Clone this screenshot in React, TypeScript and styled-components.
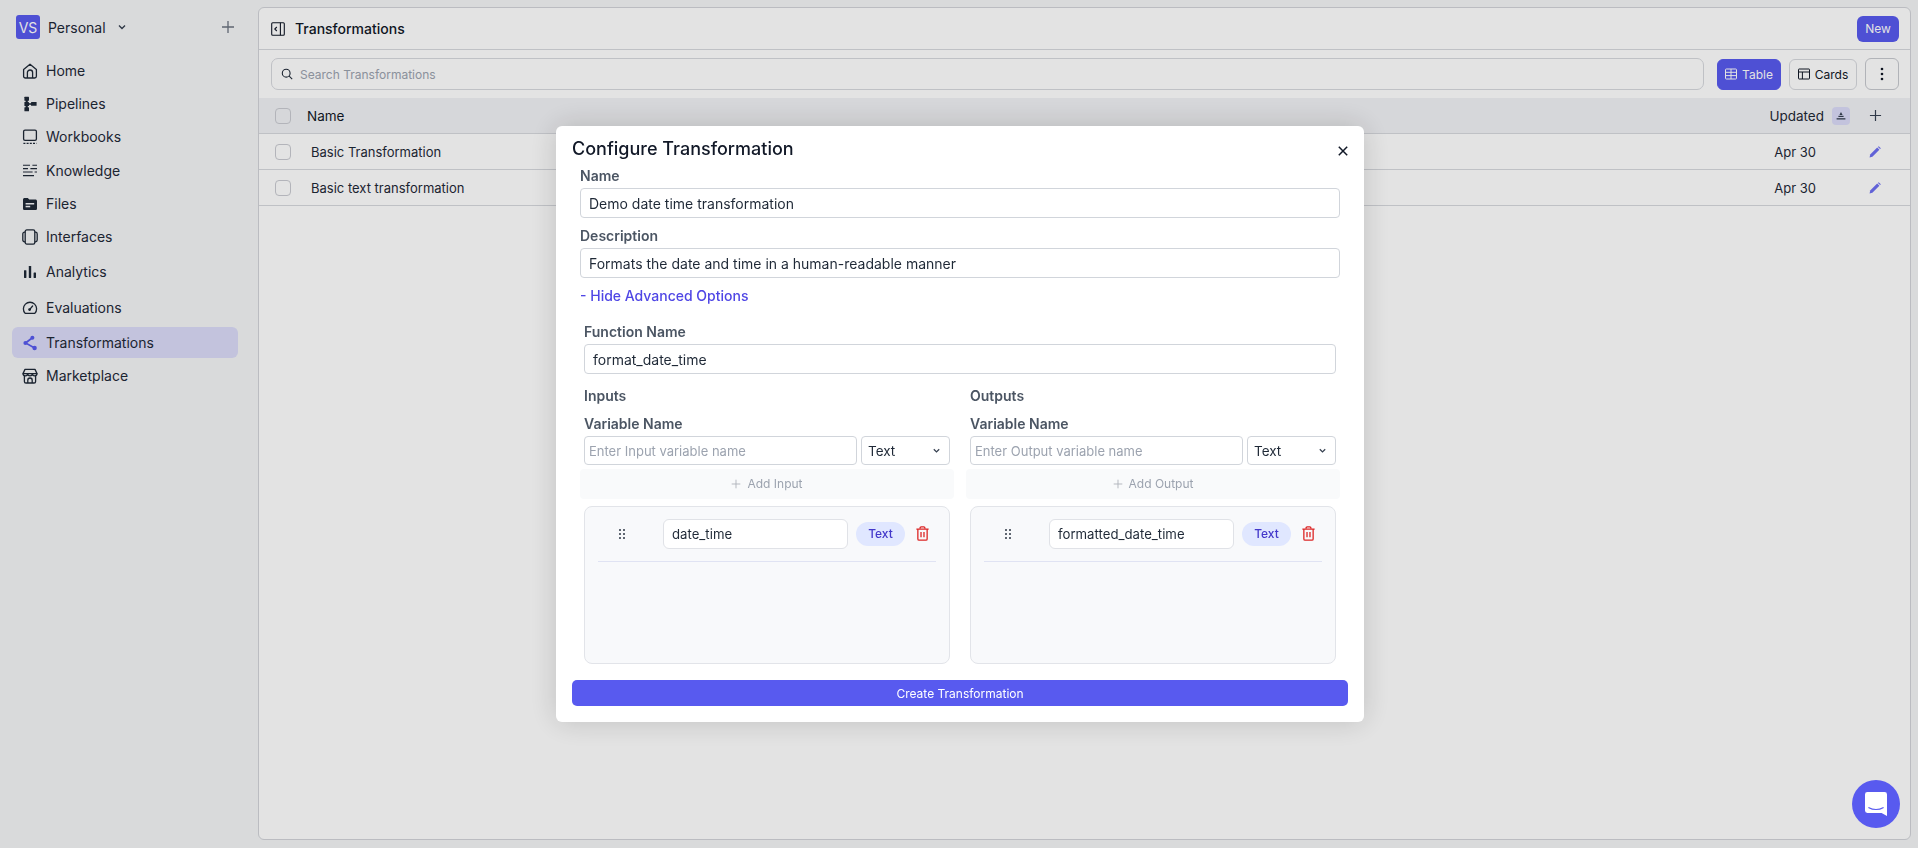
import React from 'react';
import styled, { createGlobalStyle } from 'styled-components';

const GlobalStyle = createGlobalStyle`
    html, body {
        margin: 0;
        height: 100%;
        overflow: hidden;
        background: #f4f5f7;
    }
    body, button {
        font-family: 'Inter', 'Liberation Sans', sans-serif;
    }
    * {
        box-sizing: border-box;
    }
`;

const ink = '#1f2937';

const HomeIcon = () => (
    <svg width="16" height="16" viewBox="0 0 16 16" fill="none" stroke={ink} strokeWidth="1.3" strokeLinejoin="round">
        <path d="M1.6 6.6 8 1.2l6.4 5.4v6.6a1.8 1.8 0 0 1-1.8 1.8H3.4a1.8 1.8 0 0 1-1.8-1.8z" />
        <path d="M5.4 15V9.6a2.6 2.6 0 0 1 5.2 0V15" />
    </svg>
);

const PipelineIcon = () => (
    <svg width="16" height="16" viewBox="0 0 16 16" fill={ink}>
        <rect x="2.4" y="0.8" width="4.6" height="4" rx="0.5" />
        <rect x="2.4" y="6" width="4.6" height="4" rx="0.5" />
        <rect x="2.4" y="11.2" width="4.6" height="4" rx="0.5" />
        <rect x="3.6" y="3" width="2.2" height="10" />
        <rect x="6.4" y="7.2" width="3" height="1.6" />
        <rect x="9" y="6" width="5.6" height="3.8" rx="0.5" />
    </svg>
);

const WorkbookIcon = () => (
    <svg width="16" height="16" viewBox="0 0 16 16" fill="none" stroke={ink}>
        <rect x="1.6" y="1.2" width="12.8" height="10.2" rx="1.4" strokeWidth="1.3" />
        <path d="M1.4 14.4h13.2" strokeWidth="1.2" strokeDasharray="2 1.2" />
    </svg>
);

const KnowledgeIcon = () => (
    <svg width="16" height="16" viewBox="0 0 16 16" fill="none" stroke={ink} strokeWidth="1.1">
        <path d="M1 2.2h7M10.4 2.2H15M1 5.6h5M8.4 5.6H15M1 9h9.6M12.6 9H15M1 12.6h11" />
    </svg>
);

const FilesIcon = () => (
    <svg width="16" height="16" viewBox="0 0 16 16">
        <path
            fill={ink}
            d="M1 3.6c0-.9.7-1.6 1.6-1.6h3.2l1.5 1.5h6.1c.9 0 1.6.7 1.6 1.6v7.3c0 .9-.7 1.6-1.6 1.6H2.6c-.9 0-1.6-.7-1.6-1.6z"
        />
        <rect x="3.6" y="7" width="8.6" height="1.5" fill="#f3f4f7" />
        <rect x="3.6" y="9.8" width="4.6" height="1.5" fill="#f3f4f7" />
    </svg>
);

const InterfaceIcon = () => (
    <svg width="16" height="16" viewBox="0 0 16 16" fill="none" stroke={ink} strokeWidth="1.3">
        <rect x="3.2" y="0.9" width="9.6" height="14.2" rx="1.6" />
        <path d="M3.2 3.2H2.6A1.8 1.8 0 0 0 .8 5v6a1.8 1.8 0 0 0 1.8 1.8h.6M12.8 3.2h.6A1.8 1.8 0 0 1 15.2 5v6a1.8 1.8 0 0 1-1.8 1.8h-.6" />
    </svg>
);

const AnalyticsIcon = () => (
    <svg width="16" height="16" viewBox="0 0 16 16" fill={ink}>
        <rect x="2" y="6.2" width="2.4" height="7.8" rx="0.4" />
        <rect x="6.8" y="2" width="2.4" height="12" rx="0.4" />
        <rect x="11.6" y="8.6" width="2.4" height="5.4" rx="0.4" />
    </svg>
);

const GaugeIcon = () => (
    <svg width="16" height="16" viewBox="0 0 16 16" fill="none" stroke={ink} strokeWidth="1.3" strokeLinecap="round">
        <path d="M3.2 13.4h9.6a6.6 6.6 0 1 0-9.6 0z" strokeLinejoin="round" />
        <path d="M7.6 9.6 10.6 6" />
        <circle cx="7.6" cy="9.6" r="0.8" fill={ink} />
    </svg>
);

const ShareIcon = () => (
    <svg width="16" height="16" viewBox="0 0 16 16" fill="#585aef" stroke="#585aef">
        <path d="M10.4 2.8 3.6 8l9 5" fill="none" strokeWidth="1.7" />
        <circle cx="10.4" cy="2.8" r="2" stroke="none" />
        <circle cx="3.4" cy="8" r="2" stroke="none" />
        <circle cx="12.6" cy="13" r="2.2" stroke="none" />
    </svg>
);

const StoreIcon = () => (
    <svg width="16" height="16" viewBox="0 0 16 16" fill="none" stroke={ink} strokeWidth="1.3" strokeLinejoin="round">
        <path d="M3 1.4h10l2 4.2H1z" />
        <path d="M1 5.6a2.3 2.3 0 0 0 4.66 0 2.34 2.34 0 0 0 4.68 0A2.33 2.33 0 0 0 15 5.6" />
        <path d="M2.4 8v5.4c0 .9.7 1.6 1.6 1.6h8c.9 0 1.6-.7 1.6-1.6V8" />
        <path d="M5.8 15v-2.8a2.2 2.2 0 0 1 4.4 0V15" />
    </svg>
);

const ChevronDown = ({ size = 10 }: { size?: number }) => (
    <svg width={size} height={size} viewBox="0 0 10 10" fill="none" stroke="#374151" strokeWidth="1.4">
        <path d="M2 3.6 5 6.6l3-3" />
    </svg>
);

const Plus = ({ size = 14, color = '#6b7280' }: { size?: number; color?: string }) => (
    <svg width={size} height={size} viewBox="0 0 14 14" fill="none" stroke={color} strokeWidth="1.3">
        <path d="M7 1v12M1 7h12" />
    </svg>
);

const CollapseIcon = () => (
    <svg width="14" height="14" viewBox="0 0 14 14" fill="none" stroke="#111827" strokeWidth="1.1">
        <rect x="0.7" y="0.7" width="12.6" height="12.6" rx="1" />
        <path d="M9.4 0.7v12.6M5.8 5 3.8 7l2 2" />
    </svg>
);

const SearchIcon = () => (
    <svg width="12" height="12" viewBox="0 0 12 12" fill="none" stroke="#1f2937" strokeWidth="1.1">
        <circle cx="5.2" cy="5.2" r="3.9" />
        <path d="m8.2 8.2 3 3" />
    </svg>
);

const TableIcon = () => (
    <svg width="12" height="12" viewBox="0 0 12 12" fill="none" stroke="currentColor" strokeWidth="1">
        <rect x="0.5" y="1" width="11" height="10" rx="0.8" />
        <path d="M0.5 4.3h11M0.5 7.6h11M6 1v10" />
    </svg>
);

const CardsIcon = () => (
    <svg width="12" height="12" viewBox="0 0 12 12" fill="none" stroke="currentColor" strokeWidth="1">
        <rect x="0.5" y="1" width="11" height="10" rx="0.5" />
        <path d="M0.5 4h11M4.4 4v7" />
    </svg>
);

const MoreIcon = () => (
    <svg width="4" height="14" viewBox="0 0 4 14" fill="#111827">
        <circle cx="2" cy="2" r="1.3" />
        <circle cx="2" cy="7" r="1.3" />
        <circle cx="2" cy="12" r="1.3" />
    </svg>
);

const SortIcon = () => (
    <svg width="10" height="8" viewBox="0 0 10 8" fill="#374151">
        <path d="M5 0 6.6 3H3.4z" />
        <rect x="2.4" y="3.8" width="5.2" height="1.2" />
        <rect x="0.6" y="6.2" width="8.8" height="1.3" />
    </svg>
);

const PencilIcon = () => (
    <svg width="12" height="12" viewBox="0 0 12 12" fill="#6d6ff2">
        <path d="M0.6 11.4 1.2 8.6 8.2 1.6l2.2 2.2-7 7z" />
        <path d="M8.9 0.9 9.7 0.2l2.1 2.1-.7.8z" />
    </svg>
);

const CloseIcon = () => (
    <svg width="10" height="10" viewBox="0 0 10 10" fill="none" stroke="#111827" strokeWidth="1.5">
        <path d="m0.8 0.8 8.4 8.4M9.2 0.8 0.8 9.2" />
    </svg>
);

const DragIcon = () => (
    <svg width="6" height="10" viewBox="0 0 6 10" fill="#1f2937">
        {[1, 5, 9].map((cy) => (
            <React.Fragment key={cy}>
                <circle cx="1" cy={cy} r="0.95" />
                <circle cx="5" cy={cy} r="0.95" />
            </React.Fragment>
        ))}
    </svg>
);

const TrashIcon = () => (
    <svg width="13" height="15" viewBox="0 0 14 16" fill="none" stroke="#dc2626" strokeWidth="1.4">
        <path d="M0.4 3.2h13.2M2 3.2v10.6c0 .7.6 1.3 1.3 1.3h7.4c.7 0 1.3-.6 1.3-1.3V3.2" />
        <path d="M4.4 3V2c0-.7.5-1.2 1.2-1.2h2.8c.7 0 1.2.5 1.2 1.2v1M5.4 6.4v5.6M8.6 6.4v5.6" />
    </svg>
);

const ChatIcon = () => (
    <svg width="22" height="24" viewBox="0 0 22 24">
        <path
            fill="#ffffff"
            d="M2.4 0h17.2A2.4 2.4 0 0 1 22 2.4V24l-5.4-3H2.4A2.4 2.4 0 0 1 0 18.6V2.4A2.4 2.4 0 0 1 2.4 0z"
        />
        <path d="M3.4 15.4c4.6 2.6 10.6 2.6 15.2 0" fill="none" stroke="#585aef" strokeWidth="1.1" />
    </svg>
);

const navItems = [
    { label: 'Home', icon: <HomeIcon />, top: 0 },
    { label: 'Pipelines', icon: <PipelineIcon />, top: 2 },
    { label: 'Workbooks', icon: <WorkbookIcon />, top: 2 },
    { label: 'Knowledge', icon: <KnowledgeIcon />, top: 3 },
    { label: 'Files', icon: <FilesIcon />, top: 2 },
    { label: 'Interfaces', icon: <InterfaceIcon />, top: 2 },
    { label: 'Analytics', icon: <AnalyticsIcon />, top: 4 },
    { label: 'Evaluations', icon: <GaugeIcon />, top: 5 },
    { label: 'Transformations', icon: <ShareIcon />, top: 4, active: true },
    { label: 'Marketplace', icon: <StoreIcon />, top: 2 },
];

const App: React.FC = () => {
    return (
        <Page>
            <GlobalStyle />
            <Sidebar>
                <Workspace>
                    <Avatar>VS</Avatar>
                    <WorkspaceName>Personal</WorkspaceName>
                    <ChevronDown />
                    <WorkspaceAdd>
                        <Plus />
                    </WorkspaceAdd>
                </Workspace>
                <Nav>
                    {navItems.map((item) => (
                        <NavItem key={item.label} $top={item.top} $active={item.active}>
                            {item.icon}
                            <span>{item.label}</span>
                        </NavItem>
                    ))}
                </Nav>
            </Sidebar>
            <Main>
                <Header>
                    <HeaderTitle>
                        <CollapseIcon />
                        <span>Transformations</span>
                    </HeaderTitle>
                    <NewButton>New</NewButton>
                </Header>
                <Toolbar>
                    <SearchBox>
                        <SearchIcon />
                        <span>Search Transformations</span>
                    </SearchBox>
                    <ViewButton $active $width={64}>
                        <TableIcon />
                        Table
                    </ViewButton>
                    <ViewButton $width={68}>
                        <CardsIcon />
                        Cards
                    </ViewButton>
                    <MenuButton>
                        <MoreIcon />
                    </MenuButton>
                </Toolbar>
                <TableHead>
                    <Checkbox />
                    <HeadName>Name</HeadName>
                    <HeadUpdated>Updated</HeadUpdated>
                    <SortBadge>
                        <SortIcon />
                    </SortBadge>
                    <ActionCell>
                        <Plus size={13} color="#374151" />
                    </ActionCell>
                </TableHead>
                {['Basic Transformation', 'Basic text transformation'].map((name) => (
                    <TableRow key={name}>
                        <Checkbox />
                        <RowName>{name}</RowName>
                        <RowDate>Apr 30</RowDate>
                        <ActionCell>
                            <PencilIcon />
                        </ActionCell>
                    </TableRow>
                ))}
            </Main>
            <Overlay>
                <Modal>
                    <ModalTitle>Configure Transformation</ModalTitle>
                    <CloseButton>
                        <CloseIcon />
                    </CloseButton>
                    <Form>
                        <FieldLabel>Name</FieldLabel>
                        <Field>Demo date time transformation</Field>
                        <FieldLabel $top={10}>Description</FieldLabel>
                        <Field>Formats the date and time in a human-readable manner</Field>
                        <AdvancedLink>- Hide Advanced Options</AdvancedLink>
                        <Advanced>
                            <FieldLabel>Function Name</FieldLabel>
                            <Field>format_date_time</Field>
                            <Columns>
                                <VariableColumn kind="Input" item="date_time" title="Inputs" />
                                <VariableColumn kind="Output" item="formatted_date_time" title="Outputs" />
                            </Columns>
                        </Advanced>
                    </Form>
                    <CreateButton>Create Transformation</CreateButton>
                </Modal>
            </Overlay>
            <ChatButton>
                <ChatIcon />
            </ChatButton>
        </Page>
    );
};

const VariableColumn: React.FC<{ kind: string; item: string; title: string }> = ({ kind, item, title }) => (
    <Column>
        <ColumnTitle>{title}</ColumnTitle>
        <VariableLabel>Variable Name</VariableLabel>
        <AddRow>
            <Placeholder>Enter {kind} variable name</Placeholder>
            <TypeSelect>
                Text
                <ChevronDown size={9} />
            </TypeSelect>
        </AddRow>
        <AddButton>
            <Plus size={10} color="#b0b4bb" />
            Add {kind}
        </AddButton>
        <VariableList>
            <VariableRow>
                <DragHandle>
                    <DragIcon />
                </DragHandle>
                <VariableInput>{item}</VariableInput>
                <TypeBadge>Text</TypeBadge>
                <TrashIcon />
            </VariableRow>
        </VariableList>
    </Column>
);

const Page = styled.div`
    display: flex;
    width: 1918px;
    height: 848px;
    background: #f4f5f7;
    color: #111827;
`;

const Sidebar = styled.aside`
    width: 258px;
    flex-shrink: 0;
    padding: 15px 20px 0 12px;
`;

const Workspace = styled.div`
    display: flex;
    align-items: center;
    height: 24px;
    padding-left: 4px;
`;

const Avatar = styled.div`
    width: 24px;
    height: 24px;
    border-radius: 3px;
    background: #585aef;
    color: #ffffff;
    font-size: 14px;
    display: flex;
    align-items: center;
    justify-content: center;
`;

const WorkspaceName = styled.span`
    margin: 0 11px 0 8px;
    font-size: 14px;
    color: #1f2937;
`;

const WorkspaceAdd = styled.div`
    margin-left: auto;
    margin-right: 3px;
    display: flex;
`;

const Nav = styled.nav`
    display: flex;
    flex-direction: column;
    margin-top: 16px;
`;

const NavItem = styled.div<{ $top: number; $active?: boolean }>`
    display: flex;
    align-items: center;
    gap: 8px;
    height: 31px;
    margin-top: ${(props) => props.$top}px;
    padding-left: 10px;
    border-radius: 6px;
    font-size: 14px;
    color: #1f2937;
    background: ${(props) => (props.$active ? '#dbdcf9' : 'transparent')};
`;

const Main = styled.main`
    flex: 1;
    margin: 7px 7px 8px 0;
    background: #ffffff;
    border: 1px solid #d2d4d9;
    border-radius: 6px;
    overflow: hidden;
`;

const Header = styled.header`
    display: flex;
    align-items: center;
    justify-content: space-between;
    height: 42px;
    padding: 0 11px 0 12px;
    border-bottom: 1px solid #d7d9de;
`;

const HeaderTitle = styled.div`
    display: flex;
    align-items: center;
    gap: 10px;
    font-size: 14px;
    font-weight: 500;
    color: #111827;
`;

const NewButton = styled.button`
    height: 26px;
    width: 42px;
    padding: 0;
    border: none;
    border-radius: 6px;
    background: #585aef;
    color: #ffffff;
    font-size: 12px;
`;

const Toolbar = styled.div`
    display: flex;
    align-items: center;
    gap: 8px;
    height: 48px;
    padding: 0 11px 0 12px;
`;

const SearchBox = styled.div`
    flex: 1;
    display: flex;
    align-items: center;
    gap: 7px;
    height: 32px;
    margin-right: 5px;
    padding: 0 9px;
    border: 1px solid #d7d9de;
    border-radius: 7px;
    font-size: 12px;
    color: #9ca3af;
`;

const ViewButton = styled.button<{ $active?: boolean; $width: number }>`
    display: flex;
    align-items: center;
    justify-content: center;
    gap: 5px;
    width: ${(props) => props.$width}px;
    height: 31px;
    padding: 0;
    border: 1px solid ${(props) => (props.$active ? '#585aef' : '#d7d9de')};
    border-radius: 6px;
    background: ${(props) => (props.$active ? '#585aef' : 'transparent')};
    color: ${(props) => (props.$active ? '#ffffff' : '#111827')};
    font-size: 12px;
`;

const MenuButton = styled.button`
    display: flex;
    align-items: center;
    justify-content: center;
    width: 34px;
    height: 32px;
    padding: 0;
    border: 1px solid #c7c9cf;
    border-radius: 6px;
    background: transparent;
`;

const TableHead = styled.div`
    display: flex;
    align-items: center;
    height: 36px;
    padding-left: 16px;
    background: #f1f2f5;
    border-bottom: 1px solid #d7d9de;
`;

const TableRow = styled.div`
    display: flex;
    align-items: center;
    height: 36px;
    padding-left: 16px;
    border-bottom: 1px solid #d7d9de;
`;

const Checkbox = styled.div`
    width: 16px;
    height: 16px;
    border: 1px solid #c9cbd1;
    border-radius: 4px;
`;

const HeadName = styled.div`
    margin-left: 16px;
    font-size: 13.5px;
    color: #111827;
`;

const HeadUpdated = styled.div`
    margin-left: auto;
    font-size: 13.5px;
    color: #1f2937;
`;

const SortBadge = styled.div`
    display: flex;
    align-items: center;
    justify-content: center;
    width: 18px;
    height: 18px;
    margin-left: 8px;
    border-radius: 4px;
    background: #dbdcf9;
`;

const ActionCell = styled.div`
    display: flex;
    align-items: center;
    justify-content: center;
    width: 50px;
    margin-right: 10px;
`;

const RowName = styled.div`
    margin-left: 20px;
    font-size: 13px;
    color: #1f2937;
`;

const RowDate = styled.div`
    margin-left: auto;
    margin-right: 34px;
    font-size: 13px;
    color: #1f2937;
`;

const Overlay = styled.div`
    position: fixed;
    inset: 0;
    display: flex;
    align-items: center;
    justify-content: center;
    padding-left: 2px;
    background: rgba(0, 0, 0, 0.11);
`;

const Modal = styled.div`
    position: relative;
    width: 808px;
    height: 596px;
    padding: 0 16px;
    background: #ffffff;
    border-radius: 6px;
    box-shadow: 0 0 30px rgba(0, 0, 0, 0.16);
`;

const ModalTitle = styled.h2`
    margin: 0;
    padding-top: 12px;
    font-size: 18px;
    line-height: 22px;
    font-weight: 500;
    color: #111827;
`;

const CloseButton = styled.div`
    position: absolute;
    top: 20px;
    right: 16px;
    display: flex;
`;

const Form = styled.div`
    padding: 0 8px;
`;

const FieldLabel = styled.div<{ $top?: number }>`
    margin-top: ${(props) => props.$top ?? 8}px;
    margin-bottom: 4px;
    height: 16px;
    line-height: 16px;
    font-size: 14px;
    font-weight: 600;
    color: #4b5563;
`;

const Field = styled.div`
    display: flex;
    align-items: center;
    height: 30px;
    padding: 0 8px;
    border: 1px solid #d1d5db;
    border-radius: 4px;
    font-size: 14px;
    color: #1f2937;
`;

const AdvancedLink = styled.div`
    margin-top: 9px;
    height: 18px;
    line-height: 18px;
    font-size: 14px;
    font-weight: 500;
    color: #4f46e5;
`;

const Advanced = styled.div`
    padding: 11px 4px 0;
`;

const Columns = styled.div`
    display: grid;
    grid-template-columns: 366px 366px;
    gap: 20px;
    margin-top: 14px;
`;

const Column = styled.div`
    display: flex;
    flex-direction: column;
`;

const ColumnTitle = styled.div`
    height: 16px;
    line-height: 16px;
    font-size: 14px;
    font-weight: 600;
    color: #4b5563;
`;

const VariableLabel = styled.div`
    margin-top: 12px;
    margin-bottom: 4px;
    height: 16px;
    line-height: 16px;
    font-size: 14px;
    font-weight: 600;
    color: #4b5563;
`;

const AddRow = styled.div`
    display: flex;
    gap: 4px;
    height: 29px;
`;

const Placeholder = styled.div`
    flex: 1;
    display: flex;
    align-items: center;
    padding: 0 4px;
    border: 1px solid #d1d5db;
    border-radius: 4px;
    font-size: 13px;
    color: #9ca3af;
`;

const TypeSelect = styled.div`
    display: flex;
    align-items: center;
    justify-content: space-between;
    width: 89px;
    padding: 0 8px 0 6px;
    border: 1px solid #d1d5db;
    border-radius: 4px;
    font-size: 13.5px;
    color: #1f2937;
`;

const AddButton = styled.div`
    display: flex;
    align-items: center;
    justify-content: center;
    gap: 6px;
    height: 30px;
    margin: 4px -4px 0;
    padding-bottom: 1px;
    border-radius: 4px;
    background: #f9fafb;
    font-size: 12px;
    color: #9ca3af;
`;

const VariableList = styled.div`
    height: 158px;
    margin-top: 7px;
    padding: 12px 13px 0;
    background: #f8f9fb;
    border: 1px solid #e2e4e9;
    border-radius: 8px;
`;

const VariableRow = styled.div`
    display: flex;
    align-items: center;
    height: 43px;
    padding-bottom: 13px;
    border-bottom: 1px solid #e0e3f3;
`;

const DragHandle = styled.div`
    display: flex;
    justify-content: center;
    width: 40px;
    margin-left: 4px;
    margin-right: 21px;
`;

const VariableInput = styled.div`
    display: flex;
    align-items: center;
    width: 185px;
    height: 30px;
    padding: 0 8px;
    background: #ffffff;
    border: 1px solid #e0e2e7;
    border-radius: 6px;
    font-size: 13.2px;
    color: #1f2937;
`;

const TypeBadge = styled.div`
    display: flex;
    align-items: center;
    justify-content: center;
    width: 49px;
    height: 24px;
    margin: 0 11px 0 8px;
    border-radius: 12px;
    background: #e0e7ff;
    font-size: 12px;
    font-weight: 500;
    color: #4338ca;
`;

const CreateButton = styled.button`
    display: block;
    width: 100%;
    height: 26px;
    margin-top: 16px;
    padding: 0;
    border: none;
    border-radius: 5px;
    background: #585aef;
    color: #ffffff;
    font-size: 12px;
`;

const ChatButton = styled.div`
    position: fixed;
    right: 18px;
    bottom: 20px;
    display: flex;
    align-items: center;
    justify-content: center;
    width: 48px;
    height: 48px;
    border-radius: 50%;
    background: #585aef;
`;

export default App;
